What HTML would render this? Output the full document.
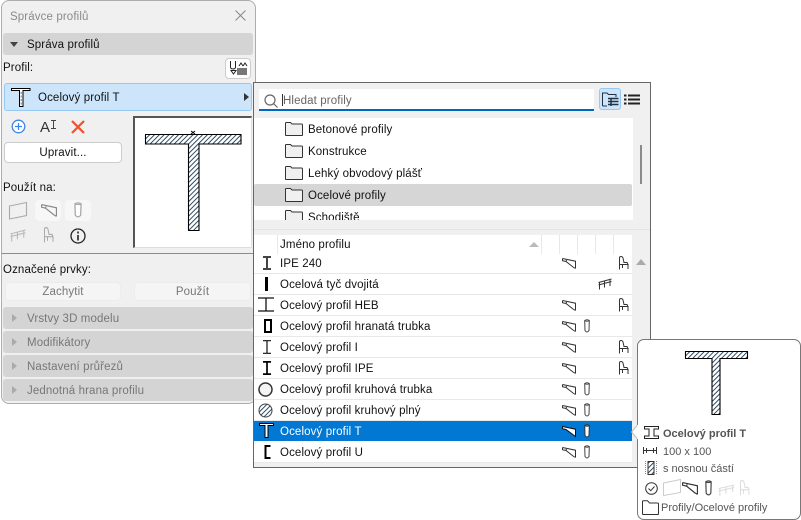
<!DOCTYPE html>
<html lang="cs"><head><meta charset="utf-8"><style>
html,body{margin:0;padding:0;width:801px;height:520px;overflow:hidden;background:#fff}
body{font-family:"Liberation Sans",sans-serif;font-size:11.5px;color:#111;position:relative}
.a{position:absolute;box-sizing:border-box}
.t{position:absolute;white-space:nowrap;line-height:14px;height:14px;letter-spacing:.12px;margin-top:1px}
.tt{font-size:11px;letter-spacing:0;color:#555}
.g{color:#777}
.sec{position:absolute;left:3px;width:250px;height:22px;background:#d4d4d4;border-radius:3px}
.tri{position:absolute;width:0;height:0;border-top:4px solid transparent;border-bottom:4px solid transparent;border-left:5px solid #aaa}
.btn{position:absolute;box-sizing:border-box;background:#fff;border:1px solid #ccc;border-radius:4px;text-align:center;letter-spacing:.12px}
svg{position:absolute;overflow:visible}
.r{position:absolute;left:254px;width:378px;height:21px;border-bottom:1px solid #e8e8e8;box-sizing:border-box;background:#fff}
</style></head><body>
<svg width="0" height="0" style="position:absolute">
<defs>
<pattern id="h" width="3.4" height="3.4" patternUnits="userSpaceOnUse" patternTransform="rotate(45)"><rect width="3.4" height="3.4" fill="#fff"/><rect width=".9" height="3.4" fill="#1c3a55"/></pattern>
<symbol id="beam" viewBox="0 0 14 11" preserveAspectRatio="none" overflow="visible"><path d="M.5 .5 13.500 3.200V10.500M.5 .5V2.700L4 3.500 11 9 13.500 10.500M4 3.500 4.500 2" fill="none" stroke="currentColor" stroke-width="1"/></symbol>
<symbol id="col" viewBox="0 0 6 14" preserveAspectRatio="none" overflow="visible"><path d="M.7 1.500Q3 0 5.300 1.500L5 11.500Q3 14.500 1 11.500ZM.7 1.500Q3 3 5.300 1.500" fill="#fff" stroke="currentColor" stroke-width="1"/></symbol>
<symbol id="rail" viewBox="0 0 14 12" preserveAspectRatio="none" overflow="visible"><path d="M.5 4.500 13.500 1M.5 7 13.500 3.500M1.500 4.200V11.500M6.500 3V9.500M12 1.500V8" fill="none" stroke="currentColor" stroke-width="1"/></symbol>
<symbol id="chair" viewBox="0 0 11 14" preserveAspectRatio="none" overflow="visible"><path d="M1.500 7.500V2Q1.500 .5 3 .5T5 2L6 6.500H9L10 8.500H1.500ZM1.500 8.500V13.500M10 8.500V13M4.500 8.500V12" fill="none" stroke="currentColor" stroke-width="1"/></symbol>
<symbol id="folder" viewBox="0 0 18 14" preserveAspectRatio="none" overflow="visible"><path d="M.5 13V1Q.5 .5 1.300 .5H5.500L7 2H16.500Q17.500 2 17.500 3V13Q17.500 13.500 16.500 13.500H1.500Q.5 13.500 .5 13Z" fill="#f0f0f0" stroke="#333"/></symbol>
</defs></svg>

<!-- left panel -->
<div class="a" style="left:1px;top:0;width:255px;height:404px;background:#f0f0f0;border:1px solid #adadad;border-radius:8px"></div>
<div class="t g" style="left:10px;top:9px;color:#8a8a8a">Správce profilů</div>
<svg style="left:235px;top:10px" width="11" height="11"><path d="M.5 .5 10.500 10.500M10.500 .5 .5 10.500" stroke="#888" fill="none"/></svg>
<div class="sec" style="top:33px"></div>
<div class="tri" style="left:10px;top:42px;border:4px solid transparent;border-top:5px solid #444;border-bottom:0"></div>
<div class="t" style="left:27px;top:37px">Správa profilů</div>
<div class="t" style="left:3px;top:60px">Profil:</div>
<div class="btn" style="left:225px;top:58px;width:26px;height:21px"></div>
<svg style="left:230px;top:60px" width="18" height="17"><path d="M.5 1V7Q.5 9 3 9T5.500 7V1M1 10.500H6L3.500 14Z M9 6 11 3 13 6M13 6 15 3 17 6" fill="none" stroke="#222"/><rect x="7" y="8" width="10" height="7" fill="#777"/></svg>

<div class="a" style="left:4px;top:83px;width:248px;height:28px;background:#cce5fb;border:1px solid #93c9f2;border-radius:3px"></div>
<svg style="left:11px;top:88px" width="20" height="19"><path d="M.5 .5H19V2.500H12V18.500H8.500V2.500H.5Z" fill="#fff" stroke="#000"/><path d="M10.200 4V17" stroke="#777" stroke-dasharray="2 1.500"/></svg>
<div class="t" style="left:38px;top:90px">Ocelový profil T</div>
<div class="a" style="left:244px;top:93px;width:0;height:0;border-top:4px solid transparent;border-bottom:4px solid transparent;border-left:5px solid #333"></div>

<svg style="left:11px;top:119px" width="15" height="15"><circle cx="7.500" cy="7.500" r="6.300" fill="#fff" stroke="#3a86ee" stroke-width="1.300"/><path d="M4 7.500H11M7.500 4V11" stroke="#3a86ee" stroke-width="1.200"/></svg>
<div class="t" style="left:40px;top:120px;font-size:15px;letter-spacing:0;color:#333">A</div>
<svg style="left:50px;top:120px" width="7" height="10"><path d="M1 .5H6M3.500 .5V8.500M1 8.500H6" stroke="#444" fill="none"/></svg>
<svg style="left:71px;top:120px" width="14" height="14"><path d="M1 1 13 13M13 1 1 13" stroke="#f4502a" stroke-width="2.200"/></svg>
<div class="btn" style="left:4px;top:142px;width:118px;height:21px;line-height:21px">Upravit...</div>

<div class="a" style="left:133px;top:116px;width:119px;height:132px;background:#fff;border:2px solid #555;border-right:1px solid #ddd;border-bottom:1px solid #ddd"></div>
<svg style="left:145px;top:134px" width="97" height="97"><path d="M.500 .500H96V10H54V96.500H43.500V10H.500Z" fill="url(#h)" stroke="#000" stroke-width="1.100"/><path d="M46 0 50 -3M46 -3 50 0" stroke="#000"/></svg>

<div class="t" style="left:3px;top:180px">Použít na:</div>
<div class="a" style="left:35px;top:200px;width:26px;height:21px;background:#f7f7f7;border-radius:4px"></div>
<div class="a" style="left:65px;top:200px;width:26px;height:21px;background:#f7f7f7;border-radius:4px"></div>
<svg style="left:9px;top:201px" width="18" height="18"><path d="M.5 5 17.500 1.500V14.500L.5 18Z" fill="none" stroke="#aaa" stroke-width="1.100"/></svg>
<svg style="left:41px;top:204px;color:#888" width="16" height="13"><use href="#beam" width="16" height="13"/></svg>
<svg style="left:74px;top:202px;color:#aaa" width="8" height="16"><use href="#col" width="8" height="16"/></svg>
<svg style="left:10px;top:229px;color:#bbb" width="16" height="13"><use href="#rail" width="16" height="13"/></svg>
<svg style="left:43px;top:227px;color:#aaa" width="11" height="16"><use href="#chair" width="11" height="16"/></svg>
<svg style="left:70px;top:228px" width="16" height="16"><circle cx="8" cy="8" r="7" fill="none" stroke="#222" stroke-width="1.300"/><path d="M8 7V12.500M8 3.500V5.500" stroke="#222" stroke-width="1.600"/></svg>

<div class="a" style="left:2px;top:253px;width:253px;height:1px;background:#8c8c8c"></div>
<div class="t" style="left:3px;top:262px">Označené prvky:</div>
<div class="btn g" style="left:5px;top:282px;width:116px;height:19px;line-height:19px;border-color:#ececec;background:#f5f5f5">Zachytit</div>
<div class="btn g" style="left:134px;top:282px;width:117px;height:19px;line-height:19px;border-color:#ececec;background:#f5f5f5">Použít</div>
<div class="sec" style="top:307px"></div><div class="tri" style="left:12px;top:314px"></div><div class="t g" style="left:27px;top:311px">Vrstvy 3D modelu</div>
<div class="sec" style="top:331px"></div><div class="tri" style="left:12px;top:338px"></div><div class="t g" style="left:27px;top:335px">Modifikátory</div>
<div class="sec" style="top:355px"></div><div class="tri" style="left:12px;top:362px"></div><div class="t g" style="left:27px;top:359px">Nastavení průřezů</div>
<div class="sec" style="top:379px"></div><div class="tri" style="left:12px;top:386px"></div><div class="t g" style="left:27px;top:383px">Jednotná hrana profilu</div>

<!-- popup -->
<div class="a" style="left:253px;top:82px;width:398px;height:386px;background:#f0f0f0;border:1px solid #666"></div>
<div class="a" style="left:259px;top:89px;width:335px;height:22px;background:#fff;border-bottom:2px solid #0067c0"></div>
<svg style="left:264px;top:94px" width="14" height="14"><circle cx="6" cy="6" r="5" fill="none" stroke="#666" stroke-width="1.200"/><path d="M9.500 9.500 13.500 13.500" stroke="#666" stroke-width="1.200"/></svg>
<div class="a" style="left:282px;top:94px;width:1px;height:12px;background:#333"></div>
<div class="t" style="left:283px;top:93px;color:#666">Hledat profily</div>
<div class="a" style="left:599px;top:88px;width:22px;height:22px;background:#cce5fb;border:1px solid #93c9f2;border-radius:3px"></div>
<svg style="left:602px;top:92px" width="17" height="15"><path d="M.5 14V1H5L6.500 2.500H14V5" fill="none" stroke="#234"/><path d="M.5 14H5" stroke="#234"/><path d="M6 6.500H16.500M6 9.500H16.500M6 12.500H16.500M9 6V14" stroke="#234" stroke-width="1.500" fill="none"/></svg>
<svg style="left:624px;top:94px" width="16" height="11"><path d="M0 1.500H2.500M4 1.500H16M0 5.500H2.500M4 5.500H16M0 9.500H2.500M4 9.500H16" stroke="#222" stroke-width="2"/></svg>

<div class="a" style="left:254px;top:118px;width:379px;height:102px;background:#fff"></div>
<div class="a" style="left:254px;top:184px;width:378px;height:22px;background:#d6d6d6;border-radius:2px"></div>
<svg style="left:285px;top:122px" width="18" height="14"><use href="#folder" width="18" height="14"/></svg>
<div class="t" style="left:308px;top:122px">Betonové profily</div>
<svg style="left:285px;top:144px" width="18" height="14"><use href="#folder" width="18" height="14"/></svg>
<div class="t" style="left:308px;top:144px">Konstrukce</div>
<svg style="left:285px;top:166px" width="18" height="14"><use href="#folder" width="18" height="14"/></svg>
<div class="t" style="left:308px;top:166px">Lehký obvodový plášť</div>
<svg style="left:285px;top:188px" width="18" height="14"><use href="#folder" width="18" height="14"/></svg>
<div class="t" style="left:308px;top:188px">Ocelové profily</div>
<div class="a" style="left:254px;top:208px;width:379px;height:12px;overflow:hidden;background:#fff">
<svg style="left:31px;top:2px" width="18" height="14"><use href="#folder" width="18" height="14"/></svg>
<div class="t" style="left:54px;top:2px">Schodiště</div></div>
<div class="a" style="left:640px;top:145px;width:2px;height:39px;background:#8a8a8a"></div>
<div class="a" style="left:254px;top:229px;width:396px;height:1px;background:#e4e4e4"></div>

<div class="a" style="left:254px;top:235px;width:378px;height:19px;background:#fff"></div>
<div class="a" style="left:277px;top:235px;width:1px;height:19px;background:#e8e8e8"></div>
<div class="a" style="left:541px;top:235px;width:1px;height:19px;background:#e8e8e8"></div>
<div class="a" style="left:559px;top:235px;width:1px;height:19px;background:#e8e8e8"></div>
<div class="a" style="left:577px;top:235px;width:1px;height:19px;background:#e8e8e8"></div>
<div class="a" style="left:595px;top:235px;width:1px;height:19px;background:#e8e8e8"></div>
<div class="a" style="left:613px;top:235px;width:1px;height:19px;background:#e8e8e8"></div>
<div class="t" style="left:280px;top:237px">Jméno profilu</div>
<div class="a" style="left:529px;top:242px;width:0;height:0;border-left:5px solid transparent;border-right:5px solid transparent;border-bottom:5px solid #bbb"></div>
<div class="a" style="left:636px;top:259px;width:0;height:0;border-left:5px solid transparent;border-right:5px solid transparent;border-bottom:6px solid #aaa"></div>

<!-- rows -->
<div class="r" style="top:254px;height:20px"></div><div class="r" style="top:274px"></div><div class="r" style="top:295px"></div><div class="r" style="top:316px"></div><div class="r" style="top:337px"></div><div class="r" style="top:358px"></div><div class="r" style="top:379px"></div><div class="r" style="top:400px"></div>
<div class="r" style="top:421px;height:20px;background:#0078d4;border:0"></div><div class="r" style="top:441px;height:22px"></div>

<svg style="left:262px;top:256px" width="10" height="14"><path d="M1 1H9M1 13H9M5 1V13" stroke="#444" stroke-width="2"/></svg>
<div class="a" style="left:265px;top:277px;width:3px;height:14px;background:#000"></div>
<svg style="left:258px;top:297px" width="16" height="15"><path d="M0 1H16M0 14H16M8 1V14" stroke="#111" stroke-width="1.300"/></svg>
<div class="a" style="left:264px;top:319px;width:8px;height:14px;border:2px solid #000;background:#fff"></div>
<svg style="left:262px;top:340px" width="10" height="14"><path d="M1 .7H9M1 13.300H9M5 1V13" stroke="#111" stroke-width="1.200"/></svg>
<svg style="left:262px;top:361px" width="10" height="14"><path d="M1 .9H9M1 13.100H9M5 1V13" stroke="#000" stroke-width="1.700"/></svg>
<svg style="left:258px;top:382px" width="15" height="15"><circle cx="7.500" cy="7.500" r="6.500" fill="#f4f4f4" stroke="#333" stroke-width="1.500"/></svg>
<svg style="left:258px;top:403px" width="15" height="15"><circle cx="7.500" cy="7.500" r="6.500" fill="url(#h)" stroke="#444"/></svg>
<svg style="left:259px;top:423px" width="15" height="15"><path d="M.5 .5H14.500V2.500H9V14.500H6V2.500H.5Z" fill="#fff" stroke="#000"/></svg>
<svg style="left:264px;top:445px" width="7" height="14"><path d="M6.500 1H1.500V13H6.500" fill="none" stroke="#000" stroke-width="2"/></svg>

<div class="t" style="left:280px;top:256px">IPE 240</div>
<div class="t" style="left:280px;top:277px">Ocelová tyč dvojitá</div>
<div class="t" style="left:280px;top:298px">Ocelový profil HEB</div>
<div class="t" style="left:280px;top:319px">Ocelový profil hranatá trubka</div>
<div class="t" style="left:280px;top:340px">Ocelový profil I</div>
<div class="t" style="left:280px;top:361px">Ocelový profil IPE</div>
<div class="t" style="left:280px;top:382px">Ocelový profil kruhová trubka</div>
<div class="t" style="left:280px;top:403px">Ocelový profil kruhový plný</div>
<div class="t" style="left:280px;top:424px;color:#fff">Ocelový profil T</div>
<div class="t" style="left:280px;top:445px">Ocelový profil U</div>

<svg style="left:562px;top:258px;color:#333" width="14" height="11"><use href="#beam" width="14" height="11"/></svg>
<svg style="left:562px;top:300px;color:#333" width="14" height="11"><use href="#beam" width="14" height="11"/></svg>
<svg style="left:562px;top:321px;color:#333" width="14" height="11"><use href="#beam" width="14" height="11"/></svg>
<svg style="left:562px;top:342px;color:#333" width="14" height="11"><use href="#beam" width="14" height="11"/></svg>
<svg style="left:562px;top:363px;color:#333" width="14" height="11"><use href="#beam" width="14" height="11"/></svg>
<svg style="left:562px;top:384px;color:#333" width="14" height="11"><use href="#beam" width="14" height="11"/></svg>
<svg style="left:562px;top:405px;color:#333" width="14" height="11"><use href="#beam" width="14" height="11"/></svg>
<svg style="left:562px;top:426px" width="14" height="11"><path d="M.5 .5 13.500 3.200V10.500L4 3.500 .5 2.700Z" fill="#fff" stroke="#111"/></svg>
<svg style="left:562px;top:447px;color:#333" width="14" height="11"><use href="#beam" width="14" height="11"/></svg>
<svg style="left:584px;top:319px;color:#444" width="6" height="14"><use href="#col" width="6" height="14"/></svg>
<svg style="left:584px;top:382px;color:#444" width="6" height="14"><use href="#col" width="6" height="14"/></svg>
<svg style="left:584px;top:403px;color:#444" width="6" height="14"><use href="#col" width="6" height="14"/></svg>
<svg style="left:584px;top:424px;color:#333" width="6" height="14"><use href="#col" width="6" height="14"/></svg>
<svg style="left:584px;top:445px;color:#444" width="6" height="14"><use href="#col" width="6" height="14"/></svg>
<svg style="left:598px;top:278px;color:#333" width="14" height="12"><use href="#rail" width="14" height="12"/></svg>
<svg style="left:618px;top:256px;color:#333" width="11" height="14"><use href="#chair" width="11" height="14"/></svg>
<svg style="left:618px;top:298px;color:#333" width="11" height="14"><use href="#chair" width="11" height="14"/></svg>
<svg style="left:618px;top:340px;color:#333" width="11" height="14"><use href="#chair" width="11" height="14"/></svg>
<svg style="left:618px;top:361px;color:#333" width="11" height="14"><use href="#chair" width="11" height="14"/></svg>

<!-- tooltip -->
<div class="a" style="left:637px;top:339px;width:164px;height:181px;background:#fff;border:1px solid #777;border-radius:7px"></div>
<svg style="left:631px;top:425px" width="8" height="14"><path d="M6.500 0 .5 7 6.500 14" fill="#fff" stroke="#bbb"/><path d="M7 0V14" stroke="#fff" stroke-width="2"/></svg>
<svg style="left:685px;top:351px" width="63" height="64"><path d="M.500 .500H62.500V7.500H35V63.500H27V7.500H.500Z" fill="url(#h)" stroke="#000" stroke-width="1.100"/></svg>
<svg style="left:644px;top:426px" width="15" height="13"><path d="M.5 .5H14.500V3H10V10H14.500V12.500H.5V10H5V3H.5Z" fill="none" stroke="#222"/></svg>
<div class="t tt" style="left:663px;top:426px;font-weight:bold">Ocelový profil T</div>
<svg style="left:643px;top:447px" width="14" height="7"><path d="M.5 0V7M13.500 0V7M.5 3.500H13.500M3.500 1V6M10.500 1V6" stroke="#333"/></svg>
<div class="t tt" style="left:663px;top:444px">100 x 100</div>
<svg style="left:645px;top:461px" width="12" height="14"><rect x="3" y=".5" width="6" height="13" fill="url(#h)" stroke="#333"/><path d="M.5 0V14M11.500 0V14" stroke="#888" stroke-dasharray="1 1"/></svg>
<div class="t tt" style="left:663px;top:461px">s nosnou částí</div>
<svg style="left:645px;top:482px" width="13" height="13"><circle cx="6.500" cy="6.500" r="5.800" fill="none" stroke="#333"/><path d="M3.500 6.500 5.700 8.700 9.500 4.500" fill="none" stroke="#333"/></svg>
<svg style="left:663px;top:479px" width="18" height="17"><path d="M.5 4 17.500 .5V13.500L.5 16.500Z" fill="none" stroke="#ccc"/></svg>
<svg style="left:682px;top:482px;color:#333" width="16" height="13"><use href="#beam" width="16" height="13"/></svg>
<svg style="left:705px;top:480px;color:#444" width="7" height="16"><use href="#col" width="7" height="16"/></svg>
<svg style="left:718px;top:484px;color:#ddd" width="17" height="12"><use href="#rail" width="17" height="12"/></svg>
<svg style="left:739px;top:480px;color:#ddd" width="11" height="16"><use href="#chair" width="11" height="16"/></svg>
<svg style="left:642px;top:500px" width="17" height="15"><path d="M.5 14V1.500Q.5 .7 1.300 .7H5.500L7.500 3H15.500Q16.500 3 16.500 4V14Q16.500 14.500 15.500 14.500H1.500Q.5 14.500 .5 14Z" fill="#fff" stroke="#333"/></svg>
<div class="t tt" style="left:661px;top:500px">Profily/Ocelové profily</div>
</body></html>
